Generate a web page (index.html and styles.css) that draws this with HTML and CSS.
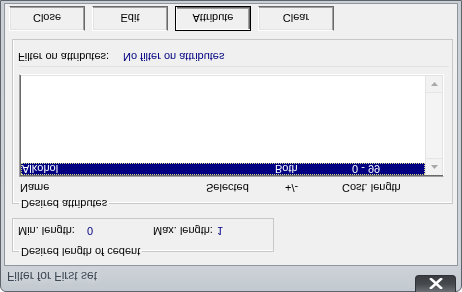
FILE: index.html
```html
<!DOCTYPE html>
<html lang="en">
<head>
    <meta charset="UTF-8">
    <title>Filter for First set</title>
    <link rel="stylesheet" href="styles.css">
</head>
<body>
    <div class="window">
        <div class="titlebar">
            <span class="title">Filter for First set</span>
            <div class="close-btn">
                <svg width="14" height="11" viewBox="0 0 14 11">
                    <path d="M2 1 L12 10 M12 1 L2 10" stroke="#fff" stroke-width="2.6" stroke-linecap="square"/>
                </svg>
            </div>
        </div>
        <div class="client">
            <fieldset class="group group-length">
                <legend>Desired length of cedent</legend>
                <div class="length-row">
                    <span class="min-lbl">Min. length:</span>
                    <span class="val min-val">0</span>
                    <span>Max. length:</span>
                    <span class="val max-val">1</span>
                </div>
            </fieldset>

            <fieldset class="group group-attr">
                <legend>Desired attributes</legend>
                <div class="header">
                    <span>Name</span>
                    <span>Selected</span>
                    <span>+/-</span>
                    <span>Cost. length</span>
                </div>
                <div class="listbox">
                    <div class="rows">
                        <div class="row selected">
                            <span>Alkohol</span>
                            <span>Both</span>
                            <span>0 - 99</span>
                        </div>
                    </div>
                    <div class="scrollbar">
                        <div class="arrow">
                            <svg width="7" height="4" viewBox="0 0 7 4"><path d="M0 4 L3.5 0 L7 4 Z" fill="#a8a8a8"/></svg>
                        </div>
                        <div class="track"></div>
                        <div class="arrow">
                            <svg width="7" height="4" viewBox="0 0 7 4"><path d="M0 0 L3.5 4 L7 0 Z" fill="#a8a8a8"/></svg>
                        </div>
                    </div>
                </div>
                <div class="sep"></div>
                <div class="filter-row">
                    <span class="filter-lbl">Filter on attributes:</span>
                    <span class="val">No filter on attributes</span>
                </div>
            </fieldset>

            <div class="buttons">
                <div class="btn">Close</div>
                <div class="btn">Edit</div>
                <div class="btn default">Attribute</div>
                <div class="btn">Clear</div>
            </div>
        </div>
    </div>
</body>
</html>
```

FILE: styles.css
```css
html, body{
    margin: 0;
    padding: 0;
    background-color: #ffffff;
    overflow: hidden;
}
body{
    font-family: "Liberation Sans", Arial, sans-serif;
    font-size: 11px;
    color: #000;
}

/* the shot is upside down, so the whole dialog is mirrored top to bottom */
.window{
    width: 462px;
    height: 292px;
    box-sizing: border-box;
    border: 1px solid #5d646c;
    border-radius: 6px 6px 0 0;
    background: linear-gradient(#c3c9d0, #cfd4da 30px, #c9cfd5);
    display: flex;
    flex-direction: column;
    padding: 0 3px 2px 3px;
    transform: scaleY(-1);
}

.titlebar{
    height: 25px;
    display: flex;
    align-items: flex-start;
    flex-shrink: 0;
}
.title{
    font-size: 12px;
    color: #3e4752;
    padding: 8px 0 0 3px;
    text-shadow: 0 0 6px #e8ecf0;
}
.close-btn{
    margin-left: auto;
    margin-right: 2px;
    margin-top: -1px;
    width: 41px;
    height: 17px;
    box-sizing: border-box;
    border: 1px solid #2f3236;
    border-top: none;
    border-radius: 0 0 4px 4px;
    background: linear-gradient(#6c6f73, #45484c 50%, #3a3c40);
    display: flex;
    align-items: center;
    justify-content: center;
}

.client{
    flex: 1;
    background-color: #f0f0f0;
    border: 1px solid #8f969e;
    padding: 7px 4px 0 4px;
    display: flex;
    flex-direction: column;
}

.group{
    margin: 0 0 0 3px;
    padding: 0;
    border: 1px solid #c8c8c8;
    box-shadow: inset 1px 1px 0 #fff;
}
.group legend{
    padding: 0 2px;
    margin-left: 6px;
    line-height: 13px;
}

.group-length{
    width: 262px;
    box-sizing: border-box;
    padding: 8px 0 5px 0;
}
.length-row{
    display: flex;
    line-height: 13px;
    padding-left: 5px;
}
.min-lbl{
    width: 69px;
}
.min-val{
    width: 66px;
}
.max-val{
    margin-left: 4px;
}
.val{
    color: #000080;
}

.group-attr{
    margin-top: 8px;
    width: 441px;
    box-sizing: border-box;
    padding: 3px 0 10px 0;
}
.header{
    display: grid;
    grid-template-columns: 186px 79px 57px auto;
    padding-left: 7px;
    line-height: 13px;
}

.listbox{
    margin: 4px 0 0 6px;
    width: 425px;
    height: 103px;
    box-sizing: border-box;
    border: 1px solid;
    border-color: #a0a0a0 #ffffff #ffffff #a0a0a0;
    box-shadow: inset 1px 1px 0 #696969, inset -1px -1px 0 #e3e3e3;
    background-color: #fff;
    display: flex;
    padding: 1px;
}
.rows{
    flex: 1;
}
.row{
    display: grid;
    grid-template-columns: 253px 77px auto;
    height: 12px;
    line-height: 11px;
    box-sizing: border-box;
}
.row.selected{
    background-color: #000080;
    color: #fff;
    border: 1px dotted #d8d890;
}
.scrollbar{
    width: 16px;
    background-color: #f4f4f4;
    display: flex;
    flex-direction: column;
    border-left: 1px solid #e4e4e4;
}
.arrow{
    height: 16px;
    display: flex;
    align-items: center;
    justify-content: center;
    background-color: #f2f2f2;
    border-bottom: 1px solid #e6e6e6;
}
.arrow:last-child{
    border-bottom: none;
    border-top: 1px solid #e6e6e6;
}
.track{
    flex: 1;
}

.sep{
    margin: 7px 0 0 6px;
    width: 430px;
    height: 1px;
    background-color: #e2e2e2;
}
.filter-row{
    display: flex;
    margin-top: 3px;
    padding-left: 5px;
    line-height: 13px;
}
.filter-lbl{
    width: 105px;
}

.buttons{
    display: flex;
    gap: 7px;
    margin-top: 8px;
}
.btn{
    width: 76px;
    height: 25px;
    box-sizing: border-box;
    background-color: #f0f0f0;
    border: 1px solid;
    border-color: #ffffff #696969 #696969 #ffffff;
    box-shadow: inset -1px -1px 0 #a0a0a0, inset 1px 1px 0 #e3e3e3;
    display: flex;
    align-items: center;
    justify-content: center;
}
.btn.default{
    border: 1px solid #000;
    box-shadow: inset 1px 1px 0 #fff, inset -1px -1px 0 #696969, inset -2px -2px 0 #a0a0a0;
}
```
